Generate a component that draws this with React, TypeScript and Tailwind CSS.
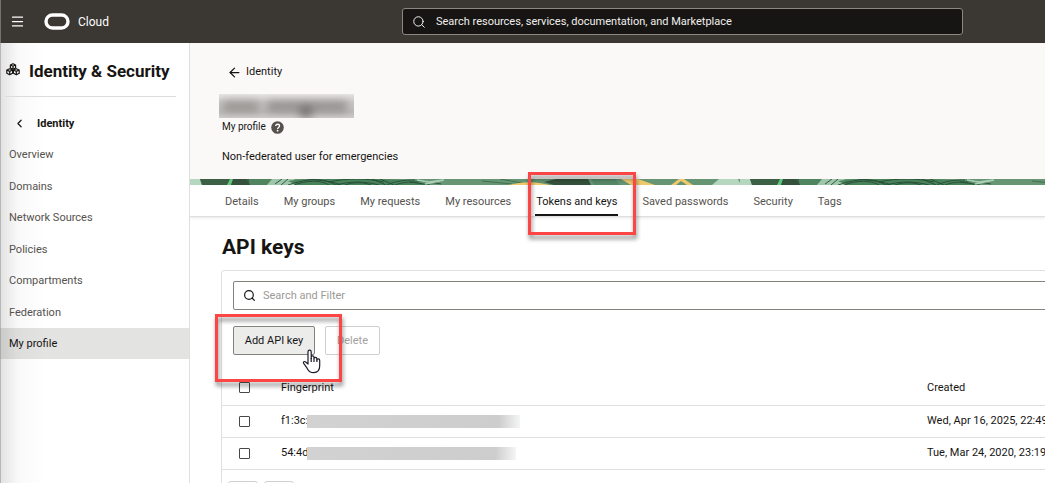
import { ArrowLeft, ChevronLeft, Menu, Search } from "lucide-react";

const navItems = ["Overview", "Domains", "Network Sources", "Policies", "Compartments", "Federation", "My profile"];
const tabs = ["Details", "My groups", "My requests", "My resources", "Tokens and keys", "Saved passwords", "Security", "Tags"];
const keys = [
  { id: "a", fingerprint: "f1:3c:", created: "Wed, Apr 16, 2025, 22:49", maskWidth: "w-[213px]" },
  { id: "b", fingerprint: "54:4d", created: "Tue, Mar 24, 2020, 23:19", maskWidth: "w-[209px]" },
];

function OracleLogo() {
  return (
    <svg width="26" height="17" viewBox="0 0 26 17" aria-hidden="true">
      <rect x="2" y="2" width="22" height="13" rx="6.5" fill="none" stroke="#fff" strokeWidth="3.4" />
    </svg>
  );
}

function SecurityIcon() {
  return (
    <svg className="shrink-0" width="14" height="13" viewBox="0 0 14 13" fill="none" stroke="#161513" strokeWidth="1.2" strokeLinejoin="round" aria-hidden="true">
      <path d="M7 .7 9.6 2v3L7 6.3 4.4 5V2ZM4.4 2 7 3.3 9.6 2M7 3.3v3" />
      <path d="M3.7 5.7 6.6 7v3.3L3.7 11.8.8 10.3V7ZM.8 7l2.9 1.4L6.6 7M3.7 8.4v3.4" />
      <path d="M10.3 5.7 13.2 7v3.3l-2.9 1.5-2.9-1.5V7ZM7.4 7l2.9 1.4L13.2 7M10.3 8.4v3.4" />
    </svg>
  );
}

function HelpIcon() {
  return (
    <svg className="block" width="13" height="13" viewBox="0 0 13 13" aria-hidden="true">
      <circle cx="6.5" cy="6.5" r="6.3" fill="#55524e" />
      <path d="M4.7 5.1c0-2.5 3.8-2.4 3.8-.1 0 1.4-1.9 1.4-1.9 2.9" fill="none" stroke="#fff" strokeWidth="1.3" />
      <circle cx="6.6" cy="9.7" r=".9" fill="#fff" />
    </svg>
  );
}

function Banner() {
  return (
    <svg className="block h-[6px] w-full" aria-hidden="true">
      <defs>
        <pattern id="strip" width="550" height="6" patternUnits="userSpaceOnUse">
          <rect width="550" height="6" fill="#659573" />
          <path d="M0 0h10l2 6H0Z" fill="#b5d7bf" />
          <path d="M10 0h49l1 6H12Z" fill="#3b6044" />
          <path d="M40 0h4l-3 6h-4Z" fill="#5ec77c" />
          <path d="M43 0h13l4 6H41Z" fill="#34513b" />
          <path d="M59 0h24l-6 6H60Z" fill="#4f845f" />
          <path d="M82 0h22l3 6H77Z" fill="#9fc5aa" />
          <path d="M98 2c40-5 100-2 132 0l5 4H107Z" fill="#478259" />
          <path d="M85 5l7-5M91 6l7-6M98 6c20-7 35-7 48 0M104 6c13-5 27-5 35 0M118 0c15 1 26 3 33 6M139 3c18-4 38-4 55 0M146 6c15-4 28-4 43 0M155 6c8-3 18-3 26 0M197 6c8-4 18-5 28-5M205 6c8-3 14-3 23-3M190 0l14 6M182 0l14 6M220 3l20 3M234 2l17 3" stroke="#254b34" strokeWidth=".9" fill="none" />
          <path d="M227 1l12 2 14-2M235 5l19-4" stroke="#a9cfb3" strokeWidth="1.6" fill="none" />
          <path d="M292 2l30 3M310 0l22 4" stroke="#3f704d" fill="none" />
          <path d="M318 6c13-3 23-4 37-1l5 1Z" fill="#f0c96d" />
          <path d="M354 3l12-3h32l3 6h-37Z" fill="#34513b" />
          <path d="M401 0h24l5 6h-26Z" fill="#578866" />
          <path d="M431 0h17l17 6h-24Z" fill="#f0c96d" />
          <path d="M481 6l8-6h5l9 6h-6l-6-4-5 4Z" fill="#f0c96d" />
          <path d="M522 6l7-6h19l3 6Z" fill="#b5d7bf" />
        </pattern>
      </defs>
      <rect width="100%" height="6" fill="url(#strip)" />
    </svg>
  );
}

function MaskedName() {
  return (
    <svg className="block" width="135" height="24" viewBox="0 0 135 24" aria-label="Masked name" role="img">
      <defs>
        <linearGradient id="nameBg" x2="0" y2="1">
          <stop stopColor="#e8e6e5" />
          <stop offset=".35" stopColor="#c8c6c4" />
          <stop offset=".75" stopColor="#bdbbb9" />
          <stop offset="1" stopColor="#cfcdcc" />
        </linearGradient>
        <filter id="soft" x="-20%" y="-50%" width="140%" height="200%"><feGaussianBlur stdDeviation="4" /></filter>
      </defs>
      <rect width="135" height="24" fill="url(#nameBg)" />
      <g filter="url(#soft)" fill="#75726f">
        <rect x="4" y="7" width="36" height="11" opacity=".55" />
        <rect x="48" y="7" width="80" height="11" opacity=".6" />
        <rect x="81" y="12" width="12" height="11" />
      </g>
    </svg>
  );
}

function HandCursor() {
  return (
    <svg width="20" height="25" viewBox="0 0 20 25" aria-hidden="true">
      <path d="M6 15V3c0-2.4 3.2-2.4 3.2 0v6.5V8c0-1.5 2.8-1.4 2.8.2v1.3c0-1.5 2.9-1.4 2.9.2v1.2c0-1.5 2.8-1.2 2.8.3v5.6c0 4.5-2 6.8-6 6.8-3.6 0-5.2-1.6-6.5-4.2l-3.5-5c-1-1.5.8-2.5 2-1.4Z" fill="#fff" stroke="#1b1b2b" strokeWidth="1.2" strokeLinejoin="round" />
      <path d="M9.2 9v4M12 9.5V13M14.9 10.5V13" stroke="#1b1b2b" strokeWidth="1.2" />
    </svg>
  );
}

const highlight = "pointer-events-none absolute z-10 border-[3px] border-[#fc4545] drop-shadow-[1px_4px_2px_rgba(0,0,0,0.45)]";
const box = "block size-[11px] appearance-none rounded-[1px] border border-[#4a4744] bg-white checked:bg-[#4a4744]";

export default function App() {
  return (
    <div className="relative flex h-screen flex-col overflow-hidden bg-white font-[Roboto,sans-serif] text-[11px] leading-4 text-[#161513]">
      <header className="flex h-[43px] shrink-0 items-center bg-[#3b3732] text-white">
        <div className="flex w-[402px] shrink-0 items-center pl-[10px]">
          <button aria-label="Navigation menu" className="mr-[19px]"><Menu size={15} strokeWidth={2} /></button>
          <a href="#home" className="flex items-center gap-2 text-[12px]"><OracleLogo />Cloud</a>
        </div>
        <label className="flex h-[27px] w-[561px] items-center gap-[10px] rounded-[3px] border border-[#8b8781] bg-[#161513] pl-[9px]">
          <Search size={14} strokeWidth={1.6} />
          <input aria-label="Search" placeholder="Search resources, services, documentation, and Marketplace" className="min-w-0 flex-1 bg-transparent outline-none placeholder:text-[#f1efed]" />
        </label>
      </header>

      <div className="flex min-h-0 flex-1">
        <aside className="w-[190px] shrink-0 border-r border-[#e0dfde] bg-linear-to-r from-[#e2e2e2] via-[#f9f9f9] via-[18px] to-white to-[44px]">
          <div className="ml-[5px] mr-[13px] flex h-[54px] items-center gap-[9px] border-b border-[#dddcdb] pl-px">
            <SecurityIcon />
            <h2 className="whitespace-nowrap pt-[2px] text-[17px] font-bold">Identity &amp; Security</h2>
          </div>
          <a href="#identity" className="flex h-[42px] items-center gap-[11px] pl-[13px] pt-[11px] font-bold">
            <ChevronLeft size={13} strokeWidth={2.2} />Identity
          </a>
          <nav className="flex h-[220px] flex-col justify-between">
            {navItems.map((item) => (
              <a key={item} href="#nav" className={`flex h-[31px] items-center pl-[9px] pt-px ${item === "My profile" ? "bg-[#161513]/12" : "text-[#55524e]"}`}>{item}</a>
            ))}
          </nav>
        </aside>

        <main className="min-w-0 flex-1 overflow-hidden">
          <section className="h-[136px] bg-[#fbf9f8] pl-[29px] pt-[21px]">
            <a href="#identity" className="flex items-center gap-[4px] pl-[8px]"><ArrowLeft size={15} strokeWidth={2} />Identity</a>
            <h1 className="mt-[14px]"><MaskedName /></h1>
            <div className="flex items-center gap-[5px] pl-[3px] pt-px text-[10px]">My profile<button aria-label="Help"><HelpIcon /></button></div>
            <p className="mt-[14px] pl-[3px]">Non-federated user for emergencies</p>
          </section>
          <Banner />
          <div role="tablist" className="flex h-[32px] gap-[23px] whitespace-nowrap border-b border-[#e0dfde] pl-[34px] shadow-[0_1px_3px_rgba(0,0,0,0.1)]">
            {tabs.map((tab) => (
              <div key={tab} className="relative flex">
                <button role="tab" aria-selected={tab === "Tokens and keys"} className={`border-b-[2px] px-[1px] pt-[4px] ${tab === "Tokens and keys" ? "border-[#161513]" : "border-transparent text-[#55524e]"}`}>{tab}</button>
                {tab === "Tokens and keys" && <span className={`${highlight} -left-[7px] -right-[18px] -top-[13px] h-[63px]`} />}
              </div>
            ))}
          </div>

          <h2 className="pl-8 pt-[16px] text-[21px] font-bold leading-[28px]">API keys</h2>
          <section className="-mr-6 ml-[31px] mt-[9px] rounded-[3px] border border-[#e0dfde]">
            <div className="pl-[11px] pt-[10px]">
              <label className="flex h-[29px] items-center gap-[7px] rounded-[2px] border border-[#85827e] pl-[9px]">
                <Search size={13} strokeWidth={2.2} />
                <input aria-label="Search and Filter" placeholder="Search and Filter" className="min-w-0 flex-1 outline-none placeholder:text-[#9b9996]" />
              </label>
              <div className="mt-[16px] flex gap-[10px]">
                <div className="relative">
                  <button className="h-[29px] w-[82px] rounded-[2px] border border-[#85827e] bg-[#ececeb]">Add API key</button>
                  <span className={`${highlight} -left-[18px] -right-[27px] -top-[12px] h-[68px]`} />
                  <span className="pointer-events-none absolute left-[69px] top-[23px] z-20"><HandCursor /></span>
                </div>
                <button className="h-[29px] w-[55px] rounded-[2px] border border-[#d0cfcd] text-[#a3a19f]" disabled>Delete</button>
              </div>
            </div>
            <table className="mt-[15px] w-full table-fixed text-left">
              <thead>
                <tr className="h-[35px] border-b border-[#e0dfde]">
                  <th className="w-[59px] pl-[17px]"><input type="checkbox" aria-label="Select all" className={box} /></th>
                  <th className="pt-[2px] font-normal">Fingerprint</th>
                  <th className="w-[141px] pt-[2px] font-normal">Created</th>
                </tr>
              </thead>
              <tbody>
                {keys.map((key) => (
                  <tr key={key.id} className="h-[32px] border-b border-[#e0dfde]">
                    <td className="pl-[17px]"><input type="checkbox" aria-label={`Select ${key.fingerprint}`} className={box} /></td>
                    <td>
                      <div className="flex items-center">
                        <span className="w-[26px] overflow-hidden whitespace-nowrap">{key.fingerprint}</span>
                        <span className={`h-[13px] ${key.maskWidth} bg-linear-to-r from-[#d2d2d3] via-[#cdcdcd] via-90% to-[#f4f5f6]`} />
                      </div>
                    </td>
                    <td className="whitespace-nowrap">{key.created}</td>
                  </tr>
                ))}
              </tbody>
            </table>
            <div className="flex gap-[6px] pb-3 pl-[6px] pt-[11px]">
              <button aria-label="Previous page" className="h-[29px] w-[30px] rounded-[3px] border border-[#d0cfcd]" />
              <button aria-label="Next page" className="h-[29px] w-[30px] rounded-[3px] border border-[#d0cfcd]" />
            </div>
          </section>
        </main>
      </div>
      <div className="pointer-events-none absolute inset-y-0 left-0 w-px bg-[#9a9a9a]/60" />
    </div>
  );
}
